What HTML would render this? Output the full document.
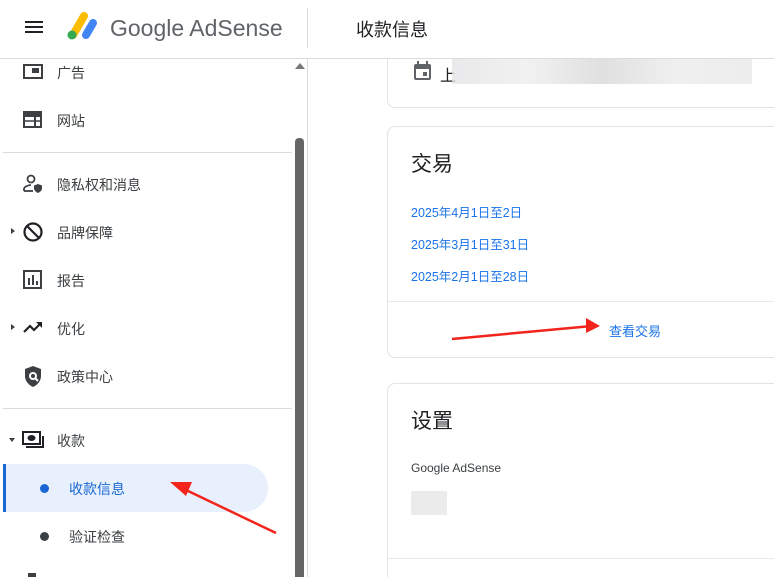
<!DOCTYPE html>
<html><head><meta charset="utf-8"><style>
*{margin:0;padding:0;box-sizing:border-box}
html,body{width:774px;height:577px;overflow:hidden}
body{background:#fff;font-family:"Liberation Sans","Noto Sans CJK SC",sans-serif;position:relative;color:#3c4043}
.abs{position:absolute}
.hdr{left:0;top:0;width:774px;height:59px;border-bottom:1px solid #dadce0;background:#fff;z-index:5}
.item{position:absolute;left:57px;font-size:14px}
.card{position:absolute;left:387px;border:1px solid #e3e3e3;border-radius:8px;border-right:none;width:400px;background:#fff}
.lnk{position:absolute;left:411px;font-size:12.5px;color:#1a73e8}
.hr{position:absolute;height:1px;background:#dadce0}
</style></head><body>
<div class="abs hdr">
 <div class="abs" style="left:25px;top:21px;width:18px;height:2px;background:#202124;box-shadow:0 5px 0 #202124,0 10px 0 #202124"></div>
 <svg class="abs" style="left:64px;top:11px" width="36" height="30" viewBox="0 0 36 30">
  <line x1="9" y1="24" x2="20" y2="5" stroke="#fbbc04" stroke-width="8" stroke-linecap="round"/>
  <line x1="22" y1="24" x2="29" y2="12" stroke="#4285f4" stroke-width="8" stroke-linecap="round"/>
  <circle cx="8" cy="24" r="4.5" fill="#34a853"/>
 </svg>
 <div class="abs" style="left:110px;top:15px;font-size:23px;color:#5f6368">Google AdSense</div>
 <div class="abs" style="left:307px;top:8px;width:1px;height:40px;background:#dadce0"></div>
 <div class="abs" style="left:356px;top:16px;font-size:18px;color:#202124">收款信息</div>
</div>
<div class="abs" style="left:307px;top:59px;width:1px;height:518px;background:#dadce0"></div>
<div class="abs" style="left:295px;top:63px;width:0;height:0;border-left:5px solid transparent;border-right:5px solid transparent;border-bottom:6px solid #777"></div>
<div class="abs" style="left:295px;top:138px;width:9px;height:439px;background:#666;border-radius:4px 4px 0 0"></div>
<svg class="abs" style="left:22px;top:63px" width="22" height="18"><rect x="2" y="2" width="18" height="13" fill="none" stroke="#3c4043" stroke-width="2"/><rect x="10" y="5" width="7" height="5" fill="#3c4043"/></svg>
<div class="item" style="top:63px">广告</div>
<svg class="abs" style="left:23px;top:111px" width="20" height="18"><rect x="1" y="1" width="17" height="15" fill="none" stroke="#3c4043" stroke-width="2"/><rect x="1" y="1" width="17" height="5" fill="#3c4043"/><line x1="1" y1="10" x2="18" y2="10" stroke="#3c4043" stroke-width="1.5"/><line x1="12" y1="6" x2="12" y2="16" stroke="#3c4043" stroke-width="2"/></svg>
<div class="item" style="top:111px">网站</div>
<div class="hr" style="left:3px;top:152px;width:289px"></div>
<svg class="abs" style="left:22px;top:174px" width="22" height="20"><circle cx="9" cy="5" r="3.5" fill="none" stroke="#3c4043" stroke-width="1.8"/><path d="M2 17v-2c0-2 4-4 7-4" fill="none" stroke="#3c4043" stroke-width="1.8"/><path d="M2 17h9" stroke="#3c4043" stroke-width="1.8"/><path d="M16 10l4 1.5v3c0 2-2 3.5-4 4.5-2-1-4-2.5-4-4.5v-3z" fill="#3c4043"/></svg>
<div class="item" style="top:175px">隐私权和消息</div>
<div class="abs" style="left:11px;top:228px;border-left:4px solid #3c4043;border-top:3px solid transparent;border-bottom:3px solid transparent"></div>
<svg class="abs" style="left:22px;top:221px" width="22" height="22"><circle cx="11" cy="11" r="8.5" fill="none" stroke="#202124" stroke-width="2.2"/><line x1="5" y1="5" x2="17" y2="17" stroke="#202124" stroke-width="2.2"/></svg>
<div class="item" style="top:223px">品牌保障</div>
<svg class="abs" style="left:23px;top:270px" width="20" height="20"><rect x="1" y="1" width="17" height="17" fill="none" stroke="#3c4043" stroke-width="2"/><rect x="5" y="8" width="2" height="7" fill="#3c4043"/><rect x="9" y="5" width="2" height="10" fill="#3c4043"/><rect x="13" y="11" width="2" height="4" fill="#3c4043"/></svg>
<div class="item" style="top:271px">报告</div>
<div class="abs" style="left:11px;top:324px;border-left:4px solid #3c4043;border-top:3px solid transparent;border-bottom:3px solid transparent"></div>
<svg class="abs" style="left:22px;top:318px" width="22" height="18"><path d="M2 14l6-6 4 4 7-7" fill="none" stroke="#202124" stroke-width="2.2"/><path d="M14 4h6v6z" fill="#202124"/></svg>
<div class="item" style="top:319px">优化</div>
<svg class="abs" style="left:23px;top:365px" width="20" height="24"><path d="M10 1l8 3v7c0 5-3.5 9-8 11-4.5-2-8-6-8-11V4z" fill="#3c4043"/><circle cx="10" cy="11" r="4" fill="#fff"/><circle cx="10" cy="11" r="2" fill="#3c4043"/><line x1="12" y1="13" x2="15" y2="16" stroke="#fff" stroke-width="2"/></svg>
<div class="item" style="top:367px">政策中心</div>
<div class="hr" style="left:3px;top:408px;width:289px"></div>
<div class="abs" style="left:9px;top:438px;border-top:4px solid #3c4043;border-left:3px solid transparent;border-right:3px solid transparent"></div>
<svg class="abs" style="left:22px;top:431px" width="22" height="18"><rect x="1" y="1" width="17" height="12" fill="none" stroke="#202124" stroke-width="2"/><ellipse cx="9.5" cy="7" rx="4" ry="3" fill="#202124"/><path d="M21 5v11H4" fill="none" stroke="#202124" stroke-width="2"/></svg>
<div class="item" style="top:431px">收款</div>
<div class="abs" style="left:3px;top:464px;width:265px;height:48px;background:#e8f0fe;border-radius:0 24px 24px 0;border-left:3px solid #1967d2"></div>
<div class="abs" style="left:40px;top:484px;width:9px;height:9px;border-radius:50%;background:#1967d2"></div>
<div class="item" style="left:69px;top:479px;color:#1967d2">收款信息</div>
<div class="abs" style="left:40px;top:532px;width:9px;height:9px;border-radius:50%;background:#3c4043"></div>
<div class="item" style="left:69px;top:527px">验证检查</div>
<div class="abs" style="left:28px;top:573px;width:8px;height:4px;background:#3c4043"></div>
<div class="card" style="top:30px;height:78px;border-top:none;border-radius:0 0 0 8px"></div>
<svg class="abs" style="left:413px;top:60px" width="20" height="22"><rect x="1" y="4" width="17" height="16" rx="2" fill="#5f6368"/><rect x="3" y="9" width="13" height="9" fill="#fff"/><rect x="10" y="12" width="4" height="4" fill="#5f6368"/><rect x="4" y="1" width="2" height="4" fill="#5f6368"/><rect x="13" y="1" width="2" height="4" fill="#5f6368"/></svg>
<div class="abs" style="left:440px;top:62px;font-size:16px;color:#202124">上</div>
<div class="abs" style="left:452px;top:58px;width:300px;height:26px;background:linear-gradient(90deg,#e4e4e6,#eeeeee 25%,#d8d8da 50%,#ececec 75%,#e8e8ea);opacity:.8"></div>
<div class="card" style="top:126px;height:232px"></div>
<div class="abs" style="left:411px;top:148px;font-size:21px;color:#202124">交易</div>
<div class="lnk" style="top:202px">2025年4月1日至2日</div>
<div class="lnk" style="top:234px">2025年3月1日至31日</div>
<div class="lnk" style="top:266px">2025年2月1日至28日</div>
<div class="hr" style="left:388px;top:301px;width:386px;background:#e8e8e8"></div>
<div class="abs" style="left:609px;top:321px;font-size:13px;color:#1a73e8">查看交易</div>
<div class="card" style="top:383px;height:194px;border-bottom:none;border-radius:8px 0 0 0"></div>
<div class="abs" style="left:411px;top:405px;font-size:21px;color:#202124">设置</div>
<div class="abs" style="left:411px;top:461px;font-size:12px;color:#3c4043">Google AdSense</div>
<div class="abs" style="left:411px;top:491px;width:36px;height:24px;background:#e6e6e6;opacity:.8"></div>
<div class="hr" style="left:388px;top:558px;width:386px;background:#e8e8e8"></div>
<svg class="abs" style="left:0;top:0;z-index:6" width="774" height="577"><path d="M276 533L186 490" stroke="#f2241c" stroke-width="2.5"/><path d="M170 482l22 0-6 14z" fill="#f2241c"/>
<path d="M452 339L592 326" stroke="#f2241c" stroke-width="2.5"/><path d="M600 326l-14-8 0 15z" fill="#f2241c"/></svg>
</body></html>
